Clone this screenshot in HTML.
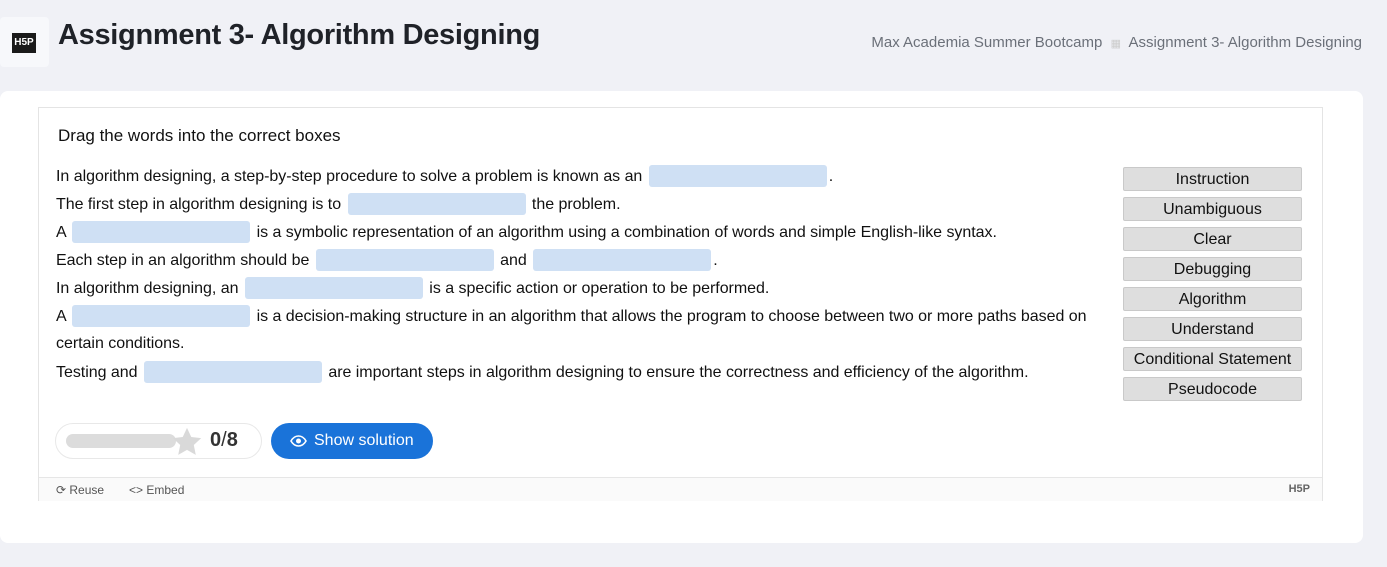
<!DOCTYPE html>
<html><head><meta charset="utf-8"><style>
body{margin:0;width:1387px;height:567px;background:#f0f1f6;font-family:"Liberation Sans",Arial,sans-serif;position:relative;overflow:hidden}
.abs{position:absolute}
.logo{left:0;top:17px;width:49px;height:50px;background:#f7f8fb;border-radius:4px}
h1{position:absolute;left:58px;top:19px;margin:0;font-size:29px;font-weight:bold;color:#1f2228;letter-spacing:-0.3px}
.bc{right:25px;top:34px;font-size:15px;color:#6b7079}
.card{left:0;top:91px;width:1363px;height:452px;background:#fff;border-radius:8px}
.h5p{left:38px;top:107px;width:1285px;height:394px;border:1px solid #e4e4e4;box-sizing:border-box}
.title{left:58px;top:126px;font-size:17px;color:#111}
.line{position:absolute;left:56px;font-size:16px;line-height:22px;color:#111;white-space:nowrap;letter-spacing:-0.03px}
.dz{display:inline-block;width:178px;height:22px;background:#cfe0f4;border-radius:3px;vertical-align:-6px;margin:0 2px}
.dr{position:absolute;left:1123px;width:179px;height:24px;box-sizing:border-box;background:#dedede;border:1px solid #c9c9c9;border-radius:2px;font-size:16px;color:#111;text-align:center;line-height:24px}
.foot{left:39px;top:477px;width:1283px;height:23px;background:#fafafa;border-top:1px solid #e6e6e6;font-size:12px;color:#555}
</style></head><body>
<div class="abs logo"><div class="abs" style="left:12px;top:16px;width:24px;height:20px;background:#1a1a1a;color:#fff;font-size:10px;font-weight:bold;text-align:center;line-height:20px">H5P</div></div>
<h1>Assignment 3- Algorithm Designing</h1>
<div class="abs bc">Max Academia Summer Bootcamp &nbsp;<span style="color:#ccc;font-size:11px">▦</span>&nbsp; Assignment 3- Algorithm Designing</div>
<div class="abs card"></div>
<div class="abs h5p"></div>
<div class="abs title">Drag the words into the correct boxes</div>
<div class="line" style="top:165px">In algorithm designing, a step-by-step procedure to solve a problem is known as an <span class="dz"></span>.</div>
<div class="line" style="top:193px">The first step in algorithm designing is to <span class="dz"></span> the problem.</div>
<div class="line" style="top:221px">A <span class="dz"></span> is a symbolic representation of an algorithm using a combination of words and simple English-like syntax.</div>
<div class="line" style="top:249px">Each step in an algorithm should be <span class="dz"></span> and <span class="dz"></span>.</div>
<div class="line" style="top:277px">In algorithm designing, an <span class="dz"></span> is a specific action or operation to be performed.</div>
<div class="line" style="top:305px">A <span class="dz"></span> is a decision-making structure in an algorithm that allows the program to choose between two or more paths based on</div>
<div class="line" style="top:333px">certain conditions.</div>
<div class="line" style="top:361px">Testing and <span class="dz"></span> are important steps in algorithm designing to ensure the correctness and efficiency of the algorithm.</div>
<div class="dr" style="top:167px">Instruction</div>
<div class="dr" style="top:197px">Unambiguous</div>
<div class="dr" style="top:227px">Clear</div>
<div class="dr" style="top:257px">Debugging</div>
<div class="dr" style="top:287px">Algorithm</div>
<div class="dr" style="top:317px">Understand</div>
<div class="dr" style="top:347px">Conditional Statement</div>
<div class="dr" style="top:377px">Pseudocode</div>
<div class="abs" style="left:55px;top:423px;width:207px;height:36px;border:1px solid #e8e8e8;border-radius:18px;box-sizing:border-box"></div>
<div class="abs" style="left:66px;top:434px;width:110px;height:14px;background:#dcdcdc;border-radius:7px"></div>
<svg class="abs" style="left:170px;top:425px" width="34" height="34" viewBox="0 0 24 24"><path d="M12 2l3 6.5 7 .8-5.2 4.8 1.4 7L12 17.6 5.8 21.1l1.4-7L2 9.3l7-.8z" fill="#d9d9d9"/></svg>
<div class="abs" style="left:210px;top:429px;font-size:20px;font-weight:bold;color:#333">0<span style="font-weight:normal">/</span>8</div>
<div class="abs" style="left:271px;top:423px;width:162px;height:36px;background:#1a73d9;border-radius:18px;color:#fff;font-size:16px;line-height:36px">
<svg class="abs" style="left:19px;top:11px" width="17" height="14" viewBox="0 0 17 14"><path d="M1 7C3 3.5 5.5 2 8.5 2S14 3.5 16 7C14 10.5 11.5 12 8.5 12S3 10.5 1 7z" fill="none" stroke="#fff" stroke-width="1.6"/><circle cx="8.5" cy="7" r="2.5" fill="#fff"/></svg>
<span style="position:absolute;left:43px">Show solution</span></div>
<div class="abs foot"><span class="abs" style="left:17px;top:5px">⟳ Reuse</span><span class="abs" style="left:90px;top:5px">&lt;&gt; Embed</span><span class="abs" style="right:12px;top:5px;font-weight:bold;color:#666;font-size:11px">H5P</span></div>
</body></html>
